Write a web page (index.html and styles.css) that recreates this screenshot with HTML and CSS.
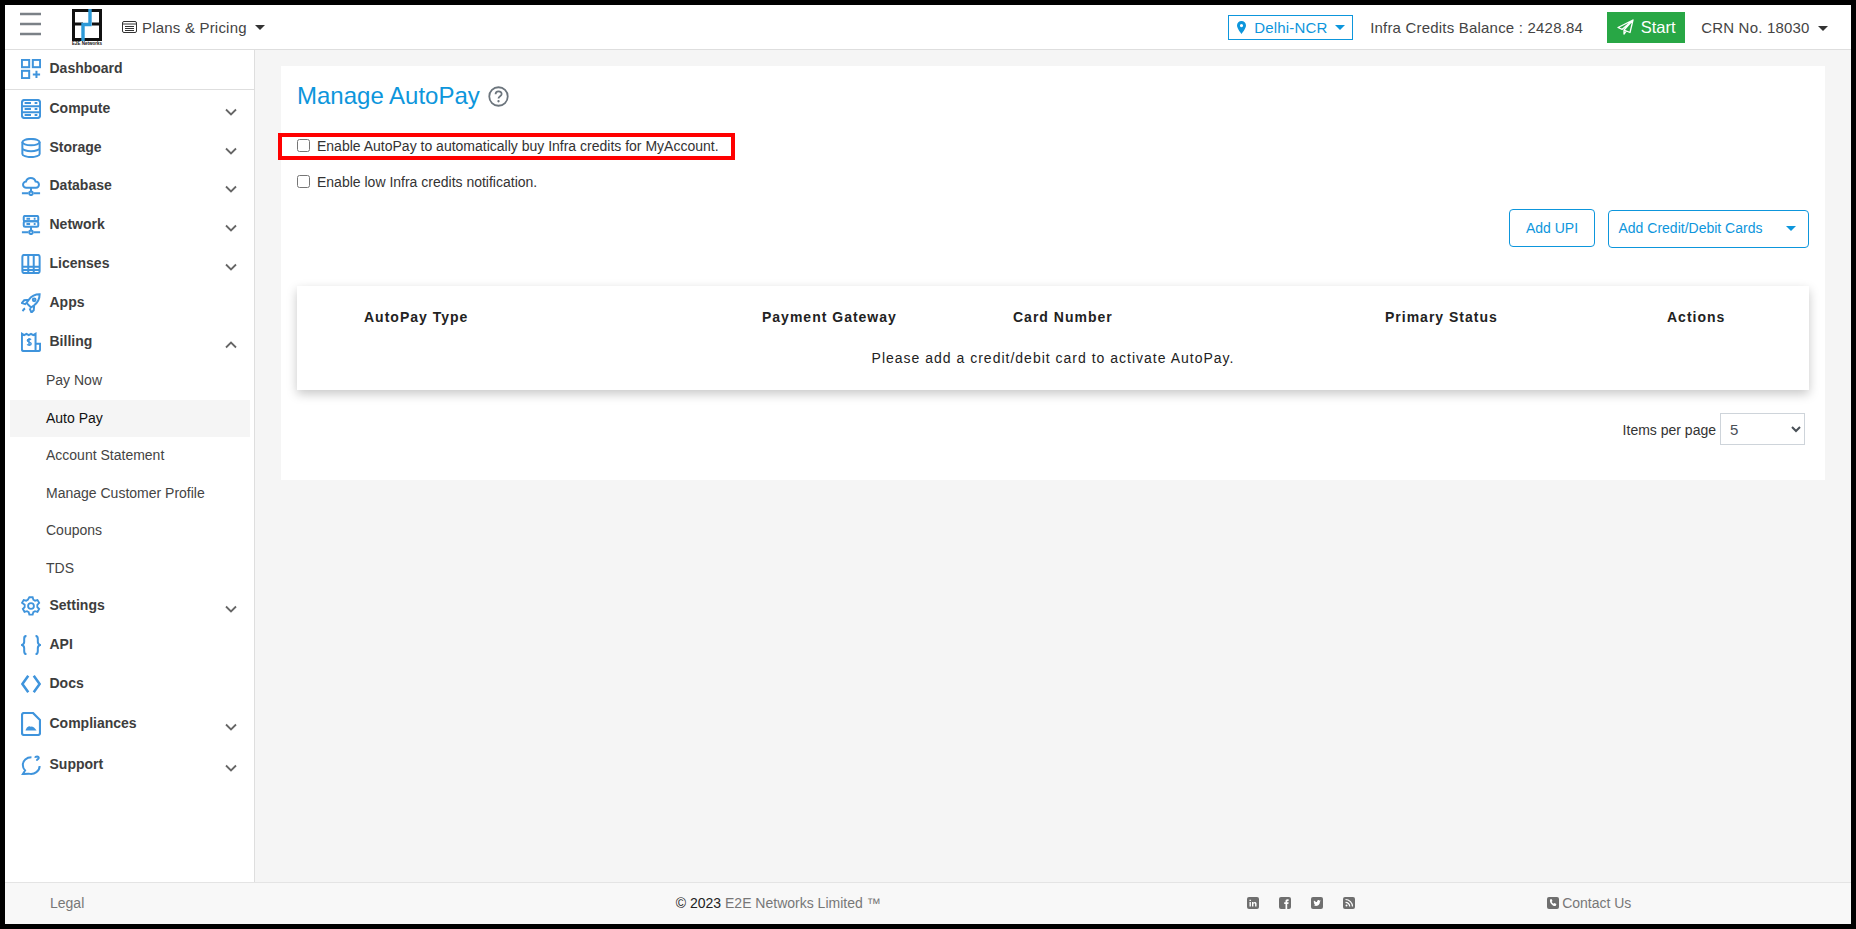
FILE: index.html
```html
<!DOCTYPE html>
<html lang="en">
<head>
<meta charset="UTF-8" />
<title>Manage AutoPay</title>
<link rel="stylesheet" href="styles.css">
</head>
<body>
<div class="app">

  <header class="topbar">
    <svg class="burger" width="24" height="24" viewBox="0 0 24 24"><path d="M2 2h21M2 12h21M2 22h21" stroke="#7b8187" stroke-width="2.4" fill="none"/></svg>
    <div class="logo">
      <svg width="30" height="32" viewBox="0 0 30 32">
        <rect x="1.500" y="1.500" width="27" height="29" fill="#fff" stroke="#111" stroke-width="3"/>
        <path d="M0 15h11M20 15h10" stroke="#111" stroke-width="3" fill="none"/>
        <path d="M18 0v15.500H11V32" stroke="#2d9ad8" stroke-width="3.400" fill="none"/>
      </svg>
      <span class="logo-text">E2E Networks</span>
    </div>
    <a class="plans">
      <svg width="15" height="12" viewBox="0 0 15 12"><rect x="0.500" y="0.500" width="14" height="11" rx="1.500" fill="none" stroke="#333"/><path d="M0 3h15M3 5.500h9M3 7.500h9M3 9.500h9" stroke="#333" stroke-width="1.100"/></svg>
      Plans &amp; Pricing <i class="caret"></i>
    </a>
    <div class="topbar-right">
      <a class="region">
        <svg width="9" height="13" viewBox="0 0 9 13"><path fill-rule="evenodd" d="M4.500 0a4.500 4.500 0 0 1 4.500 4.500C9 7.500 4.500 13 4.500 13S0 7.500 0 4.500A4.500 4.500 0 0 1 4.500 0zm0 3a1.600 1.600 0 1 0 0 3.200 1.600 1.600 0 0 0 0-3.200z" fill="#0d96dc"/></svg>
        Delhi-NCR <i class="caret caret-blue"></i>
      </a>
      <span class="credits">Infra Credits Balance : 2428.84</span>
      <a class="start">
        <svg width="17" height="16" viewBox="0 0 17 16"><path d="M16 1L1 8.500l4.200 1.800L16 1zM16 1L7 11l6 2.500L16 1zM7 11v4l2.200-3" fill="none" stroke="#fff" stroke-width="1.300" stroke-linejoin="round"/></svg>
        Start
      </a>
      <a class="crn">CRN No. 18030 <i class="caret"></i></a>
    </div>
  </header>

  <div class="middle">
    <aside class="sidebar">
      <a class="nav-item nav-first">
        <svg class="nav-icon" viewBox="0 0 22 22"><rect x="1" y="1" width="8" height="8"/><rect x="13" y="1" width="8" height="8"/><rect x="1" y="13" width="8" height="8"/><path d="M17 13v8M13 17h8"/></svg>
        <span class="nav-label">Dashboard</span>
      </a>
      <a class="nav-item">
        <svg class="nav-icon" viewBox="0 0 22 22"><rect x="1" y="1" width="20" height="20" rx="3"/><path d="M1 8h20M1 14.500h20M4 4.500h7M4 11h7M4 17.500h7M15 4.500h3M15 11h3M15 17.500h3"/></svg>
        <span class="nav-label">Compute</span>
        <svg class="chev" viewBox="0 0 12 8"><path d="M1 1.500l5 5 5-5"/></svg>
      </a>
      <a class="nav-item">
        <svg class="nav-icon" viewBox="0 0 22 22"><ellipse cx="11" cy="4.500" rx="9.500" ry="3.500"/><path d="M1.500 4.500v13c0 2 4.500 3.500 9.500 3.500s9.500-1.500 9.500-3.500v-13M1.500 11c0 2 4.500 3.500 9.500 3.500s9.500-1.500 9.500-3.500M4 11v.1M4 17v.1"/></svg>
        <span class="nav-label">Storage</span>
        <svg class="chev" viewBox="0 0 12 8"><path d="M1 1.500l5 5 5-5"/></svg>
      </a>
      <a class="nav-item">
        <svg class="nav-icon" viewBox="0 0 22 22"><path d="M6 13a3.500 3.500 0 0 1-.5-7A5.500 5.500 0 0 1 16 6a3.500 3.500 0 0 1 .5 7zM11 13v5M1 19h7M14 19h7"/><circle cx="11" cy="19" r="2"/></svg>
        <span class="nav-label">Database</span>
        <svg class="chev" viewBox="0 0 12 8"><path d="M1 1.500l5 5 5-5"/></svg>
      </a>
      <a class="nav-item">
        <svg class="nav-icon" viewBox="0 0 22 22"><rect x="3" y="1" width="16" height="6" rx="1.500"/><rect x="3" y="7" width="16" height="6" rx="1.500"/><path d="M6 4h4M6 10h4M14 4h2M14 10h2M11 13v5M1 19h7M14 19h7"/><circle cx="11" cy="19" r="2"/></svg>
        <span class="nav-label">Network</span>
        <svg class="chev" viewBox="0 0 12 8"><path d="M1 1.500l5 5 5-5"/></svg>
      </a>
      <a class="nav-item">
        <svg class="nav-icon" viewBox="0 0 22 22"><rect x="1.500" y="1" width="19" height="20" rx="2"/><path d="M1.500 14h19M8 1v20M14 1v20M1.500 17.500h19"/></svg>
        <span class="nav-label">Licenses</span>
        <svg class="chev" viewBox="0 0 12 8"><path d="M1 1.500l5 5 5-5"/></svg>
      </a>
      <a class="nav-item">
        <svg class="nav-icon" viewBox="0 0 22 22"><path d="M20.500 1.500c-5 0-9 2-12 6L6 11l5 5 3.500-2.500c4-3 6-7 6-12zM8.500 7.500L3.500 8 1 11l4.500 1.500M14.500 13.500L14 19l-2.500 2.500-2-4.500M4.500 17c-1.300.5-2.200 1.500-2.500 3"/><circle cx="14.500" cy="7.500" r="1.500"/></svg>
        <span class="nav-label">Apps</span>
      </a>
      <a class="nav-item">
        <svg class="nav-icon" viewBox="0 0 22 22"><path d="M16 13h5v6a2 2 0 0 1-2 2H3a2 2 0 0 1-2-2V2l2.500 1.500L6 2l2.500 1.500L11 2l2.500 1.500L16 2v19"/><path stroke-width="1.600" d="M11 8.500c-.7-1-4-1.300-4 .9 0 2.300 4.200 1.100 4.200 3.500 0 2.200-3.500 1.900-4.400.7M8.800 6.500v9"/></svg>
        <span class="nav-label">Billing</span>
        <svg class="chev" viewBox="0 0 12 8"><path d="M1 6.500l5-5 5 5"/></svg>
      </a>
      <ul class="subnav">
        <li>Pay Now</li>
        <li class="active">Auto Pay</li>
        <li>Account Statement</li>
        <li>Manage Customer Profile</li>
        <li>Coupons</li>
        <li>TDS</li>
      </ul>
      <a class="nav-item">
        <svg class="nav-icon" viewBox="0 0 24 24"><path d="M10 1.500h4l.8 3 2 1.100 3-.8 2 3.400-2.200 2.300v2.800l2.200 2.300-2 3.400-3-.8-2 1.100-.8 3h-4l-.8-3-2-1.100-3 .8-2-3.400 2.200-2.300v-2.800L1.200 8.200l2-3.400 3 .8 2-1.100z"/><circle cx="12" cy="12" r="3.500"/></svg>
        <span class="nav-label">Settings</span>
        <svg class="chev" viewBox="0 0 12 8"><path d="M1 1.500l5 5 5-5"/></svg>
      </a>
      <a class="nav-item">
        <svg class="nav-icon" viewBox="0 0 22 22"><path d="M6 1C3.500 1 3.500 2.500 3.500 4.500v3C3.500 9.500 2.500 10.500 1 11c1.500.5 2.500 1.500 2.500 3.500v3c0 2 0 3.500 2.500 3.500M16 1c2.500 0 2.500 1.500 2.500 3.500v3c0 2 1 3 2.500 3.500-1.500.5-2.500 1.500-2.500 3.500v3c0 2 0 3.500-2.500 3.500"/></svg>
        <span class="nav-label">API</span>
      </a>
      <a class="nav-item">
        <svg class="nav-icon nav-icon-bold" viewBox="0 0 22 22"><path d="M8 2L1.500 11 8 20M14 2l6.500 9L14 20"/></svg>
        <span class="nav-label">Docs</span>
      </a>
      <a class="nav-item item-tall">
        <svg class="nav-icon icon-tall" viewBox="0 0 20 24"><path d="M3 1h9l7 7v13a2 2 0 0 1-2 2H3a2 2 0 0 1-2-2V3a2 2 0 0 1 2-2zM6.500 8v.1M6 17.500c.8-2.500 2.500-2.500 3.500-1.200 1-1 2.500-1 4 1.200z"/></svg>
        <span class="nav-label">Compliances</span>
        <svg class="chev" viewBox="0 0 12 8"><path d="M1 1.500l5 5 5-5"/></svg>
      </a>
      <a class="nav-item item-tall">
        <svg class="nav-icon" viewBox="0 0 22 22"><path d="M11.500 2.500C6 2.500 2 6 2 11c0 2.500 1 4.500 2.500 6L2 21l6.500-.5c6.500 1.500 12-3 12-8.500M15.500 3c.5-2 4-2 4 .2 0 1.500-2 1.300-2 3M17.500 9v.1"/></svg>
        <span class="nav-label">Support</span>
        <svg class="chev" viewBox="0 0 12 8"><path d="M1 1.500l5 5 5-5"/></svg>
      </a>
    </aside>

    <main class="content">
      <section class="card">
        <h1 class="title">Manage AutoPay
          <svg width="21" height="21" viewBox="0 0 20 20"><circle cx="10" cy="10" r="8.800" fill="none" stroke="#6c757d" stroke-width="1.700"/><path d="M7.200 7.800c0-3.600 5.800-3.600 5.800-.2 0 2.200-3 2.200-3 4.400" fill="none" stroke="#6c757d" stroke-width="1.700"/><circle cx="10" cy="14.500" r="1.100" fill="#6c757d"/></svg>
        </h1>
        <label class="check check-marked"><input type="checkbox"> Enable AutoPay to automatically buy Infra credits for MyAccount.</label>
        <label class="check"><input type="checkbox"> Enable low Infra credits notification.</label>
        <div class="actions">
          <a class="btn btn-upi">Add UPI</a>
          <a class="btn btn-cards">Add Credit/Debit Cards <i class="caret caret-blue"></i></a>
        </div>
        <div class="table-wrap">
          <table class="grid">
            <thead>
              <tr>
                <th class="col-type">AutoPay Type</th>
                <th class="col-gateway">Payment Gateway</th>
                <th class="col-card">Card Number</th>
                <th class="col-primary">Primary Status</th>
                <th>Actions</th>
              </tr>
            </thead>
            <tbody>
              <tr><td colspan="5">Please add a credit/debit card to activate AutoPay.</td></tr>
            </tbody>
          </table>
        </div>
        <div class="pager">
          <span class="pager-label">Items per page</span>
          <select><option>5</option><option>10</option></select>
        </div>
      </section>
    </main>
  </div>

  <footer class="footer">
    <a class="legal">Legal</a>
    <span class="copy"><b>© 2023</b> E2E Networks Limited ™</span>
    <div class="social">
      <svg class="soc" viewBox="0 0 12 12"><rect width="12" height="12" rx="2" fill="#6f6f6f"/><path d="M2.500 5h1.400v4.500H2.500zM2.500 2.800h1.400v1.300H2.500zM5 5h1.300v.7c.8-1.200 3.200-1.100 3.200 1v2.800H8.100V7c0-1.100-1.700-1.100-1.700 0v2.500H5z" fill="#fff"/></svg>
      <svg class="soc" viewBox="0 0 12 12"><rect width="12" height="12" rx="2" fill="#6f6f6f"/><path d="M6.500 12V7H5.200V5.300h1.300V4.200C6.500 3 7.200 2.300 8.500 2.300h1.100V4h-.8c-.5 0-.6.200-.6.600v.7h1.400L9.400 7H8.200v5z" fill="#fff"/></svg>
      <svg class="soc" viewBox="0 0 12 12"><rect width="12" height="12" rx="2" fill="#6f6f6f"/><path d="M2.500 8.500c2.500 1.500 6.500.3 6.500-4l1-.9-1.200.1c-.6-1-2.800-.8-2.800 1.300-1.200 0-2.300-.6-3-1.500-.4.800-.2 1.600.4 2.200l-.6-.1c0 .8.500 1.400 1.200 1.600l-.6.1c.2.500.7.900 1.300.9-.6.400-1.300.4-2.200.3z" fill="#fff"/></svg>
      <svg class="soc" viewBox="0 0 12 12"><rect width="12" height="12" rx="2" fill="#6f6f6f"/><path d="M2.500 2.500c3.800 0 7 3.200 7 7M2.500 5.300c2.300 0 4.200 1.900 4.200 4.200" fill="none" stroke="#fff" stroke-width="1.200"/><circle cx="3.500" cy="8.500" r="1" fill="#fff"/></svg>
    </div>
    <a class="contact">
      <svg class="soc" viewBox="0 0 12 12"><rect width="12" height="12" rx="2" fill="#6f6f6f"/><path d="M3 2.500l1.500-.5 1 2-.8.8c.3.800 1 1.600 1.800 1.900l.9-.8 2 1-.5 1.600c-.5.800-1.700.6-3-.1C4 7.300 2.400 5 3 2.500z" fill="#fff"/></svg>
      Contact Us
    </a>
  </footer>
</div>
</body>
</html>
```

FILE: styles.css
```css
* {
  box-sizing: border-box;
}
html, body {
  height: 100%;
  margin: 0;
}
body {
  background: #000;
  padding: 5px;
  font-family: "Liberation Sans", Arial, sans-serif;
  font-size: 14px;
  color: #333;
}
a {
  text-decoration: none;
  color: inherit;
}
.app {
  height: 100%;
  display: flex;
  flex-direction: column;
  background: #f5f5f5;
}

/* top bar */
.topbar {
  height: 45px;
  flex: none;
  display: flex;
  align-items: center;
  background: #fff;
  border-bottom: 1px solid #dedede;
}
.burger {
  margin: -6px 0 0 13px;
}
.logo {
  width: 30px;
  margin-left: 30px;
  display: flex;
  flex-direction: column;
  align-items: center;
  color: #111;
}
.logo svg {
  display: block;
}
.logo-text {
  font-size: 4.500px;
  line-height: 5px;
  font-weight: bold;
  white-space: nowrap;
}
.plans {
  margin-left: 20px;
  display: flex;
  align-items: center;
  gap: 5px;
  font-size: 15px;
  letter-spacing: 0.2px;
  color: #444;
}
.plans .caret {
  margin-left: 3px;
}
.caret {
  display: inline-block;
  width: 0;
  height: 0;
  margin-left: 4px;
  border-left: 5px solid transparent;
  border-right: 5px solid transparent;
  border-top: 5px solid #333;
  vertical-align: middle;
}
.caret-blue {
  border-top-color: #0d96dc;
}
.topbar-right {
  margin-left: auto;
  display: flex;
  align-items: center;
  font-size: 15px;
}
.region {
  width: 125px;
  height: 25px;
  padding: 0 6px 0 8px;
  display: flex;
  align-items: center;
  gap: 8px;
  white-space: nowrap;
  letter-spacing: 0.2px;
  border: 1px solid #0d96dc;
  color: #0d96dc;
}
.region .caret {
  margin-left: -1px;
}
.credits {
  margin-left: 17px;
  color: #444;
  letter-spacing: 0.2px;
}
.start {
  width: 78px;
  height: 31px;
  margin-left: 24px;
  display: flex;
  align-items: center;
  justify-content: center;
  gap: 7px;
  background: #28a745;
  color: #fff;
  font-size: 16.500px;
}
.crn {
  margin: 0 23px 0 16px;
  letter-spacing: 0.2px;
  color: #444;
}

/* sidebar */
.middle {
  flex: 1;
  min-height: 0;
  display: flex;
}
.sidebar {
  width: 250px;
  flex: none;
  background: #fff;
  border-right: 1px solid #dedede;
}
.nav-item {
  height: 38.800px;
  padding: 0 17px 0 16px;
  display: flex;
  align-items: center;
  color: #3d3d3d;
  font-weight: bold;
}
.nav-first {
  height: 39.500px;
  border-bottom: 1px solid #dedede;
}
.item-tall {
  height: 41px;
}
.nav-icon {
  width: 20px;
  height: 20px;
  margin-right: 8.500px;
  flex: none;
  fill: none;
  stroke: #3f94dc;
  stroke-width: 2.200;
}
.nav-icon-bold {
  stroke-width: 2.800;
}
.icon-tall {
  height: 24px;
}
.nav-label {
  flex: 1;
  margin-top: -2px;
}
.chev {
  width: 12px;
  height: 8px;
  margin: 6px 0 0;
  fill: none;
  stroke: #666;
  stroke-width: 1.800;
}
.subnav {
  list-style: none;
  margin: 0 0 -1px;
  padding: 1px 4px 0 5px;
  font-size: 14px;
}
.subnav li {
  height: 37.600px;
  padding-left: 36px;
  line-height: 37px;
  color: #444;
}
.subnav .active {
  background: #f5f5f5;
  color: #111;
}

/* main card */
.content {
  flex: 1;
  min-width: 0;
  padding: 16px 26px 0 26px;
}
.card {
  background: #fff;
  padding: 14px 16px 35px;
}
.title {
  margin: 0 0 21px;
  display: flex;
  align-items: center;
  gap: 8px;
  font-size: 24px;
  line-height: 32px;
  font-weight: normal;
  color: #0d96dc;
}
.check {
  width: fit-content;
  height: 21px;
  display: flex;
  align-items: center;
  gap: 7px;
  white-space: nowrap;
  color: #333;
}
.check input {
  width: 13px;
  height: 13px;
  margin: 0;
}
.check-marked {
  width: 457px;
  height: 27px;
  margin: 0 0 11px -19px;
  padding: 0 15px 2px;
  border: 4px solid #f00;
}
.actions {
  margin-top: 17px;
  display: flex;
  justify-content: flex-end;
  align-items: flex-start;
  gap: 13px;
}
.btn {
  height: 38px;
  display: flex;
  align-items: center;
  justify-content: space-between;
  border: 1px solid #0d96dc;
  border-radius: 4px;
  color: #0d96dc;
}
.btn-upi {
  width: 86px;
  justify-content: center;
}
.btn-cards {
  width: 201px;
  margin-top: 1px;
  padding: 0 12px 2px 9.500px;
}
.table-wrap {
  margin-top: 38px;
  box-shadow: 0 4px 10px rgba(0, 0, 0, 0.22);
}
.grid {
  width: 100%;
  table-layout: fixed;
  border-collapse: collapse;
  letter-spacing: 1px;
}
.grid th {
  height: 62px;
  padding: 0;
  text-align: left;
  font-size: 14px;
  color: #222;
}
.grid td {
  height: 42px;
  padding: 0 0 22px;
  text-align: center;
  font-size: 14px;
  color: #222;
}
.col-type {
  width: 465px;
  padding-left: 67px !important;
}
.col-gateway {
  width: 251px;
}
.col-card {
  width: 372px;
}
.col-primary {
  width: 282px;
}
.pager {
  margin-top: 23px;
  padding-right: 4px;
  display: flex;
  justify-content: flex-end;
  align-items: center;
  gap: 4px;
}
.pager-label {
  padding-top: 2px;
}
.pager select {
  width: 85px;
  height: 32px;
  padding-left: 5px;
  background: #fff;
  border: 1px solid #ced4da;
  border-radius: 0;
  font-family: inherit;
  font-size: 15px;
  color: #495057;
}

/* footer */
.footer {
  height: 42px;
  flex: none;
  padding-bottom: 1px;
  display: flex;
  align-items: center;
  background: #f8f8f8;
  border-top: 1px solid #e4e4e4;
  color: #777;
}
.legal {
  margin-left: 45px;
}
.copy {
  margin-left: 591.500px;
}
.copy b {
  font-weight: normal;
  color: #222;
}
.social {
  margin-left: 366.500px;
  display: flex;
  gap: 20px;
}
.soc {
  width: 12px;
  height: 12px;
  display: block;
}
.contact {
  margin-left: 192px;
  display: flex;
  align-items: center;
  gap: 3px;
}
```
